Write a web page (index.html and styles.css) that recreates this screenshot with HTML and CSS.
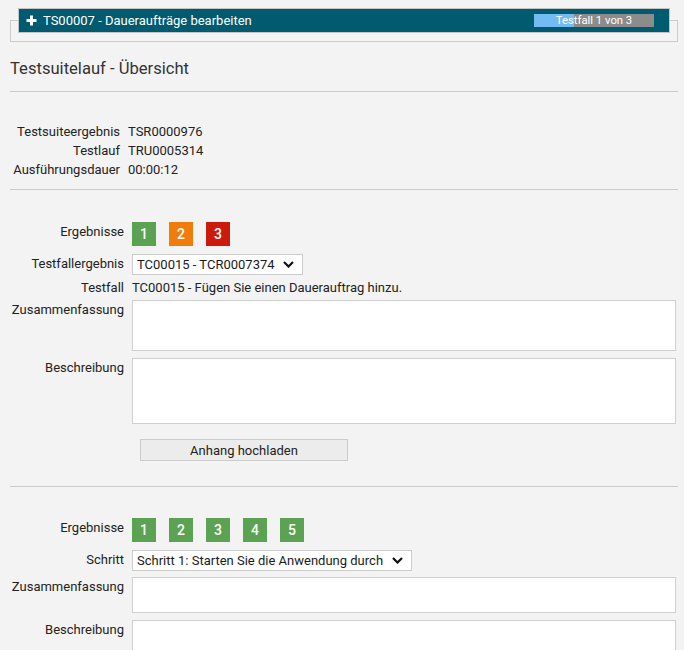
FILE: index.html
```html
<!DOCTYPE html>
<html lang="de">
<head>
<meta charset="utf-8">
<title>Testsuitelauf - Übersicht</title>
<link rel="stylesheet" href="styles.css">
</head>
<body>
<div class="panel">
  <div class="bar">
    <svg class="plus" width="11" height="11" viewBox="0 0 11 11"><path d="M5.5 0.5V10.5M0.5 5.5H10.5" stroke="#fff" stroke-width="3"/></svg>
    <span class="bar-title">TS00007 - Daueraufträge bearbeiten</span>
    <div class="progress">
      <div class="progress-fill" style="width:33.33%"></div>
      <span class="progress-text">Testfall 1 von 3</span>
    </div>
  </div>
</div>

<h1 class="title">Testsuitelauf - Übersicht</h1>

<div class="info">
  <div class="info-label">Testsuiteergebnis</div><div class="info-value">TSR0000976</div>
  <div class="info-label">Testlauf</div><div class="info-value">TRU0005314</div>
  <div class="info-label">Ausführungsdauer</div><div class="info-value">00:00:12</div>
</div>

<div class="section">
  <div class="form">
    <div class="label">Ergebnisse</div>
    <div class="results">
      <span class="res green">1</span>
      <span class="res orange">2</span>
      <span class="res red">3</span>
    </div>

    <div class="label r-select">Testfallergebnis</div>
    <div class="r-select"><div class="select w1"><span>TC00015 - TCR0007374</span><svg class="chev" width="11" height="7" viewBox="0 0 11 7"><path d="M1 1L5.5 5.5L10 1" fill="none" stroke="#111" stroke-width="2.2"/></svg></div></div>

    <div class="label r-text">Testfall</div>
    <div class="r-text text">TC00015 - Fügen Sie einen Dauerauftrag hinzu.</div>

    <div class="label r-text2">Zusammenfassung</div>
    <div class="r-text2"><div class="area h51"></div></div>

    <div class="label r-area">Beschreibung</div>
    <div class="r-area"><div class="area h66"></div></div>

    <div></div>
    <div class="r-btn"><div class="btn">Anhang hochladen</div></div>
  </div>
</div>

<div class="section last">
  <div class="form">
    <div class="label">Ergebnisse</div>
    <div class="results">
      <span class="res green">1</span>
      <span class="res green">2</span>
      <span class="res green">3</span>
      <span class="res green">4</span>
      <span class="res green">5</span>
    </div>

    <div class="label r-select">Schritt</div>
    <div class="r-select"><div class="select w2"><span>Schritt 1: Starten Sie die Anwendung durch</span><svg class="chev" width="11" height="7" viewBox="0 0 11 7"><path d="M1 1L5.5 5.5L10 1" fill="none" stroke="#111" stroke-width="2.2"/></svg></div></div>

    <div class="label r-sum2">Zusammenfassung</div>
    <div class="r-sum2"><div class="area h36"></div></div>

    <div class="label r-area">Beschreibung</div>
    <div class="r-area"><div class="area h66"></div></div>
  </div>
</div>
</body>
</html>
```

FILE: styles.css
```css
html, body {
  margin: 0;
  padding: 0;
  background: #f3f3f3;
  font-family: Roboto, "Liberation Sans", Arial, sans-serif;
  font-size: 13px;
  color: #222;
}

.panel {
  margin: 20px 6px 0 10px;
  height: 20px;
  border: 1px solid #cccccc;
}

.bar {
  margin: -13px 7px 0 7px;
  height: 23px;
  border: 1px solid #c4c4c4;
  background: #015b70;
  display: flex;
  align-items: center;
  color: #fff;
  padding-left: 7px;
}

.plus {
  flex: none;
  margin-right: 6px;
}

.bar-title {
  font-size: 13px;
  flex: 1;
}

.progress {
  position: relative;
  width: 120px;
  height: 13px;
  background: #8c8c8c;
  margin-right: 15px;
  display: flex;
  justify-content: center;
  align-items: center;
}

.progress-fill {
  position: absolute;
  left: 0;
  top: 0;
  bottom: 0;
  background: #74bbf3;
}

.progress-text {
  position: relative;
  font-size: 11.3px;
  line-height: 13px;
  color: #fff;
}

.title {
  margin: 17px 6px 0 10px;
  padding-bottom: 12px;
  border-bottom: 1px solid #cccccc;
  font-size: 16.6px;
  line-height: 20px;
  font-weight: normal;
  color: #333;
}

.info {
  margin: 0 6px 0 10px;
  padding: 30px 0 10px;
  border-bottom: 1px solid #cccccc;
  display: grid;
  grid-template-columns: 110px 1fr;
  column-gap: 8px;
  line-height: 19px;
}

.info-label {
  text-align: right;
}

.section {
  margin: 0 6px 0 10px;
  border-bottom: 1px solid #cccccc;
  padding: 32px 0 25px;
}

.section.last {
  border-bottom: none;
  padding-top: 31px;
  padding-bottom: 0;
}

.form {
  display: grid;
  grid-template-columns: 114px 544px;
  column-gap: 8px;
  align-items: start;
  line-height: 19px;
}

.label {
  text-align: right;
}

.results {
  display: flex;
  gap: 13px;
}

.res {
  width: 24px;
  height: 24px;
  display: flex;
  align-items: center;
  justify-content: center;
  color: #fff;
  font-size: 14px;
  font-weight: 500;
}

.green { background: #5ba352; }
.orange { background: #f07d0b; }
.red { background: #cc1a0c; }

.r-select { margin-top: 8px; }
.r-text { margin-top: 3px; }
.r-text2 { margin-top: 3px; }
.r-area { margin-top: 7px; }
.r-sum2 { margin-top: 6px; }
.r-btn { margin-top: 15px; }

.select {
  box-sizing: border-box;
  height: 21px;
  background: #fff;
  border: 1px solid #cccccc;
  display: flex;
  align-items: center;
  justify-content: space-between;
  padding: 0 8px 0 4px;
  color: #1a1a1a;
}

.w1 { width: 171px; }
.w2 { width: 280px; }

.chev { flex: none; }

.text { color: #222; }

.area {
  box-sizing: border-box;
  width: 544px;
  background: #fff;
  border: 1px solid #d0d0d0;
}

.h51 { height: 51px; }
.h66 { height: 66px; }
.h36 { height: 36px; }

.btn {
  box-sizing: border-box;
  margin-left: 8px;
  width: 208px;
  height: 22px;
  background: #ececec;
  border: 1px solid #cccccc;
  display: flex;
  align-items: center;
  justify-content: center;
  color: #222;
}
```
